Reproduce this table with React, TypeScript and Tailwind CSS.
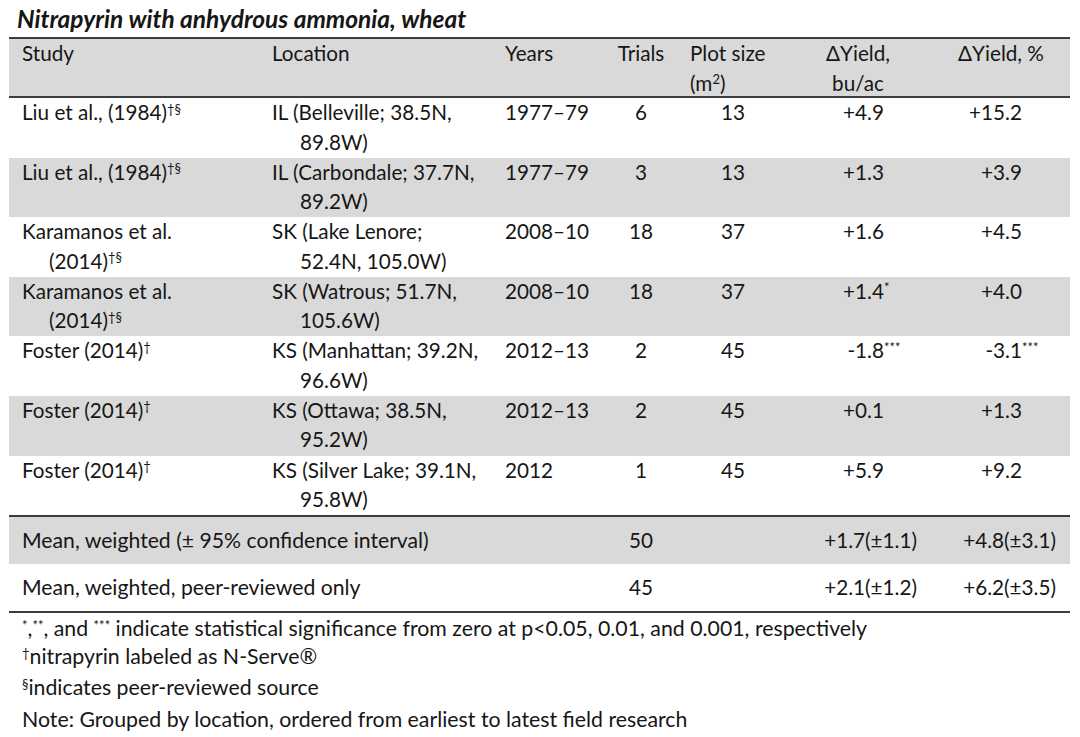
const rows = [
  { study: ["Liu et al., (1984)", "†§"], study2: null, loc: ["IL (Belleville; 38.5N,", "89.8W)"], years: "1977–79", trials: "6", plot: "13", dy: "+4.9", dyS: "", dp: "+15.2", dpS: "" },
  { study: ["Liu et al., (1984)", "†§"], study2: null, loc: ["IL (Carbondale; 37.7N,", "89.2W)"], years: "1977–79", trials: "3", plot: "13", dy: "+1.3", dyS: "", dp: "+3.9", dpS: "" },
  { study: ["Karamanos et al.", ""], study2: ["(2014)", "†§"], loc: ["SK (Lake Lenore;", "52.4N, 105.0W)"], years: "2008–10", trials: "18", plot: "37", dy: "+1.6", dyS: "", dp: "+4.5", dpS: "" },
  { study: ["Karamanos et al.", ""], study2: ["(2014)", "†§"], loc: ["SK (Watrous; 51.7N,", "105.6W)"], years: "2008–10", trials: "18", plot: "37", dy: "+1.4", dyS: "*", dp: "+4.0", dpS: "" },
  { study: ["Foster (2014)", "†"], study2: null, loc: ["KS (Manhattan; 39.2N,", "96.6W)"], years: "2012–13", trials: "2", plot: "45", dy: "-1.8", dyS: "***", dp: "-3.1", dpS: "***" },
  { study: ["Foster (2014)", "†"], study2: null, loc: ["KS (Ottawa; 38.5N,", "95.2W)"], years: "2012–13", trials: "2", plot: "45", dy: "+0.1", dyS: "", dp: "+1.3", dpS: "" },
  { study: ["Foster (2014)", "†"], study2: null, loc: ["KS (Silver Lake; 39.1N,", "95.8W)"], years: "2012", trials: "1", plot: "45", dy: "+5.9", dyS: "", dp: "+9.2", dpS: "" },
];

const grid = "grid grid-cols-[253px_233px_105px_82px_102px_148px_138px]";

// superscript that hangs past the right-aligned number without pushing it
function Hang({ s }: { s: string }) {
  return (
    <span className="inline-block w-0 whitespace-nowrap text-left">
      <sup className="text-[13px]">{s}</sup>
    </span>
  );
}

export default function App() {
  return (
    <div
      className="w-[1080px] h-[737px] bg-white text-[#161616] text-[20.7px]"
      style={{ fontFamily: "Lato, 'Open Sans', sans-serif" }}
    >
      <div className="pl-[17px] pt-[3px] h-[37px] text-[24.5px] font-bold italic leading-[32px]">
        Nitrapyrin with anhydrous ammonia, wheat
      </div>

      <div className="ml-[9px] w-[1061px]">
        {/* header */}
        <div className={`${grid} h-[61px] bg-[#d9d9d9] border-y-2 border-[#3d3d3d] leading-[29.5px]`}>
          <div className="pl-[13px]">Study</div>
          <div className="pl-[10px]">Location</div>
          <div className="pl-[10px]">Years</div>
          <div className="text-center">Trials</div>
          <div className="pl-[8px]">
            Plot size
            <br />
            (m<sup className="text-[13px]">2</sup>)
          </div>
          <div className="text-center">
            ΔYield,
            <br />
            bu/ac
          </div>
          <div className="text-center">ΔYield, %</div>
        </div>

        {/* data rows */}
        {rows.map((r, i) => (
          <div
            key={i}
            className={`${grid} h-[59.6px] leading-[29.5px] ${i % 2 === 1 ? "bg-[#d9d9d9]" : "bg-white"}`}
          >
            <div className="pl-[13px]">
              {r.study[0]}
              {r.study[1] && <sup className="text-[13px]">{r.study[1]}</sup>}
              {r.study2 && (
                <div className="pl-[27px]">
                  {r.study2[0]}
                  <sup className="text-[13px]">{r.study2[1]}</sup>
                </div>
              )}
            </div>
            <div className="pl-[10px]">
              <div className="whitespace-nowrap">{r.loc[0]}</div>
              <div className="pl-[28px]">{r.loc[1]}</div>
            </div>
            <div className="pl-[10px]">{r.years}</div>
            <div className="text-center">{r.trials}</div>
            <div className="text-center">{r.plot}</div>
            <div className="text-right pr-[48px]">
              {r.dy}
              {r.dyS && <Hang s={r.dyS} />}
            </div>
            <div className="text-right pr-[48px]">
              {r.dp}
              {r.dpS && <Hang s={r.dpS} />}
            </div>
          </div>
        ))}

        {/* means */}
        <div className={`${grid} h-[49px] items-center bg-[#d9d9d9] border-t-2 border-[#3d3d3d] text-[21.2px]`}>
          <div className="col-span-3 pl-[13px]">Mean, weighted (± 95% confidence interval)</div>
          <div className="text-center text-[20.7px]">50</div>
          <div />
          <div className="text-right pr-[15px] text-[20.7px]">+1.7(±1.1)</div>
          <div className="text-right pr-[14px] text-[20.7px]">+4.8(±3.1)</div>
        </div>
        <div className={`${grid} h-[49px] items-center border-b-2 border-[#3d3d3d] text-[21.2px]`}>
          <div className="col-span-3 pl-[13px]">Mean, weighted, peer-reviewed only</div>
          <div className="text-center text-[20.7px]">45</div>
          <div />
          <div className="text-right pr-[15px] text-[20.7px]">+2.1(±1.2)</div>
          <div className="text-right pr-[14px] text-[20.7px]">+6.2(±3.5)</div>
        </div>

        {/* footnotes */}
        <div className="pl-[13px] pt-[2px] text-[21.3px]">
          <div className="h-[26px] leading-[26px]">
            <sup className="text-[13px]">*</sup>,<sup className="text-[13px]">**</sup>, and{" "}
            <sup className="text-[13px]">***</sup> indicate statistical significance from zero at p&lt;0.05, 0.01, and
            0.001, respectively
          </div>
          <div className="h-[30px] leading-[30px]">
            <sup className="text-[13px]">†</sup>nitrapyrin labeled as N-Serve®
          </div>
          <div className="h-[33px] leading-[33px]">
            <sup className="text-[13px]">§</sup>indicates peer-reviewed source
          </div>
          <div className="h-[30px] leading-[30px]">Note: Grouped by location, ordered from earliest to latest field research</div>
        </div>
      </div>
    </div>
  );
}
